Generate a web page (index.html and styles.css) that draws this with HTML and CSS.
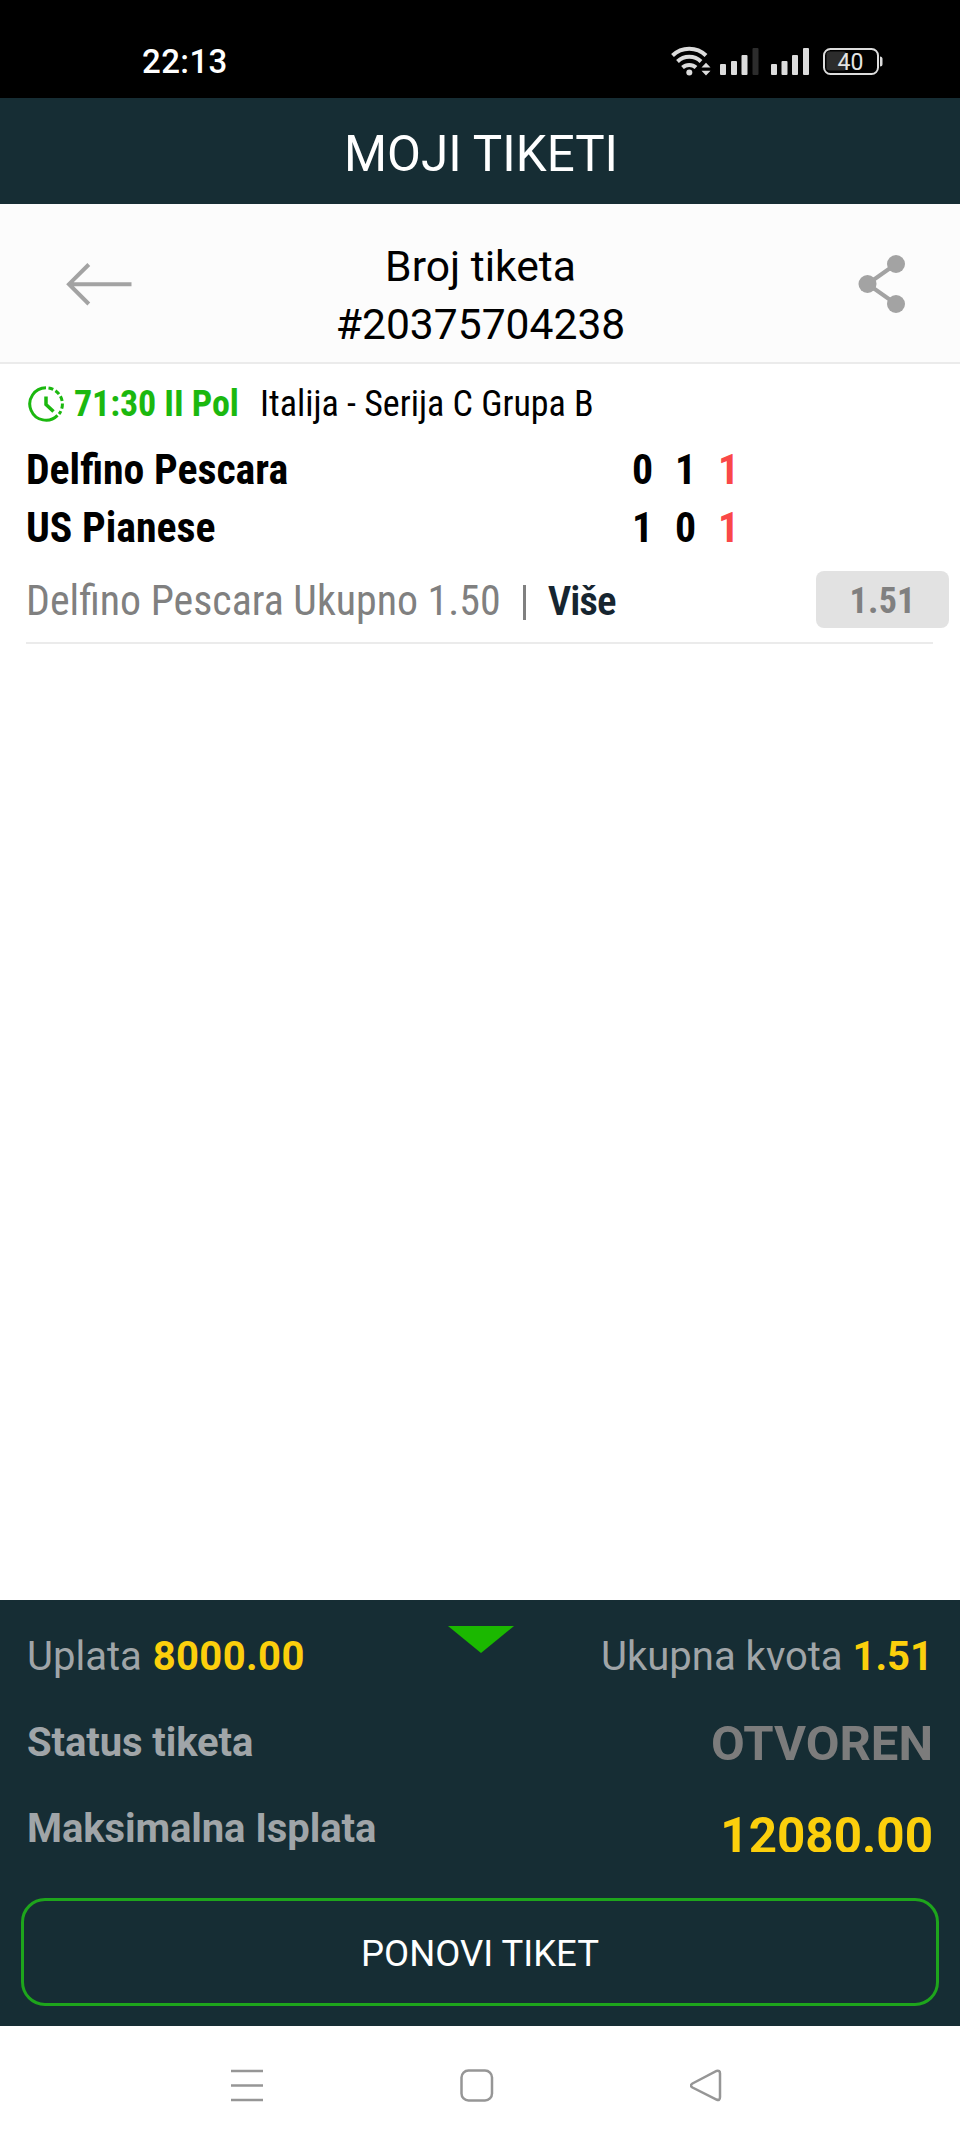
FILE: index.html
```
<!DOCTYPE html>
<html lang="sr">
<head>
    <meta charset="UTF-8">
    <meta name="viewport" content="width=device-width, initial-scale=1.0">
    <title>Moji tiketi</title>
    <link rel="stylesheet" href="styles.css">
</head>
<body>
    <!-- Statusna traka -->
    <div class="status-bar">
        <span class="time">22:13</span>
        <svg class="status-icons" width="216" height="34" viewBox="668 44 216 34">
            <g fill="none" stroke="#dcdcdc" stroke-width="4">
                <path d="M672.5 55.500 A24 24 0 0 1 706 55.500"/>
                <path d="M677.500 61.500 A17 17 0 0 1 701 61.500"/>
                <path d="M682.500 67.500 A10 10 0 0 1 696 67.500"/>
            </g>
            <g fill="#dcdcdc">
                <circle cx="689.300" cy="72.500" r="3"/>
                <path d="M701.500 67.500h9l-4.500-4.800zM701.500 70.800h9l-4.500 4.800z"/>
                <rect x="720" y="64" width="6" height="11" rx="1"/>
                <rect x="731" y="61" width="6" height="14" rx="1"/>
                <rect x="741.500" y="55" width="6" height="20" rx="1"/>
                <rect x="752.500" y="48" width="6" height="27" rx="1" fill="#2c2c2c"/>
                <rect x="771" y="64" width="6" height="11" rx="1"/>
                <rect x="781.500" y="61" width="6" height="14" rx="1"/>
                <rect x="792" y="55" width="6" height="20" rx="1"/>
                <rect x="803" y="48" width="6" height="27" rx="1"/>
                <path d="M880 56.500q2.500 0 2.500 2.500v5q0 2.500-2.500 2.500z"/>
            </g>
            <rect x="826.500" y="51.500" width="20" height="19" rx="3" fill="#2c2c2c"/>
            <rect x="824" y="49" width="54" height="25" rx="6.500" fill="none" stroke="#dcdcdc" stroke-width="2"/>
            <text class="battery" x="850.500" y="69.500">40</text>
        </svg>
    </div>

    <div class="title-bar">MOJI TIKETI</div>

    <!-- Broj tiketa -->
    <div class="ticket-head">
        <svg width="68" height="44" viewBox="65 262 68 44" fill="none" stroke="#a3a3a3" stroke-width="4">
            <path d="M131.500 284.200H68.500M88.800 264.500L69 284.200L88.800 304"/>
        </svg>
        <div class="ticket-number">Broj tiketa<br>#20375704238</div>
        <svg width="48" height="60" viewBox="858 254 48 60" fill="#a3a3a3">
            <path d="M896 264L867.500 284L896 304" fill="none" stroke="#a3a3a3" stroke-width="4"/>
            <circle cx="896" cy="264" r="9"/>
            <circle cx="867.500" cy="284" r="9"/>
            <circle cx="896" cy="304" r="9"/>
        </svg>
    </div>

    <!-- Mec -->
    <div class="match">
        <div class="match-info">
            <svg width="36" height="36" viewBox="0 0 36 36" fill="none" stroke="#1bb80f" stroke-width="3">
                <path d="M18 1.800A16.200 16.200 0 1 0 29.500 29.400"/>
                <path d="M20.500 2A16.200 16.200 0 0 1 31 28" stroke-dasharray="5 2.500"/>
                <path d="M18 10.500V18.500L25.500 25.500" stroke-width="3.500"/>
            </svg>
            <span class="clock">71:30 II Pol</span>
            <span class="league">Italija - Serija C Grupa B</span>
        </div>
        <div class="team">
            <span class="team-name">Delfino Pescara</span>
            <span class="score">0</span>
            <span class="score">1</span>
            <span class="score total">1</span>
        </div>
        <div class="team">
            <span class="team-name">US Pianese</span>
            <span class="score">1</span>
            <span class="score">0</span>
            <span class="score total">1</span>
        </div>
        <div class="bet">
            <span class="bet-name">Delfino Pescara Ukupno 1.50</span>
            <span class="divider"></span>
            <span class="more">Više</span>
            <span class="odds">1.51</span>
        </div>
    </div>

    <!-- Pregled uplate -->
    <div class="summary">
        <div class="row">
            <div class="stake">Uplata <b>8000.00</b></div>
            <svg class="toggle" width="66" height="28" viewBox="0 0 66 28"><path d="M0 0H66L33 27z" fill="#1bb800"/></svg>
            <div class="total-odds">Ukupna kvota <b>1.51</b></div>
        </div>
        <div class="row">
            <b class="label">Status tiketa</b>
            <b class="status">OTVOREN</b>
        </div>
        <div class="row">
            <b class="label">Maksimalna Isplata</b>
            <b class="payout">12080.00</b>
        </div>
        <button class="repeat">PONOVI TIKET</button>
    </div>

    <!-- Navigacija telefona -->
    <div class="nav-bar">
        <svg width="34" height="34" viewBox="0 0 34 34"><path d="M1 2H33M1 16.500H33M1 31H33"/></svg>
        <svg width="34" height="34" viewBox="0 0 34 34"><rect x="1.500" y="1.500" width="30.500" height="30" rx="7"/></svg>
        <svg width="34" height="34" viewBox="0 0 34 34"><path d="M26.500 2Q30 1 30 4.500V28Q30 32 26.500 30.500L2.500 18.500Q-0.500 16.500 2.500 14.500z"/></svg>
    </div>
</body>
</html>
```
FILE: styles.css
```
body {
    margin: 0;
    width: 960px;
    height: 2144px;
    display: flex;
    flex-direction: column;
    background-color: white;
    font-family: Roboto, sans-serif;
    color: #000;
    overflow: hidden;
    white-space: nowrap;
}
svg {
    display: block;
    flex: none;
}
.status-bar {
    height: 98px;
    box-sizing: border-box;
    padding: 44px 76px 0 142px;
    display: flex;
    justify-content: space-between;
    background-color: black;
}
.time {
    color: white;
    font-size: 33px;
    line-height: 36px;
    letter-spacing: 0.4px;
    font-weight: 500;
}
.battery {
    font-size: 23px;
    fill: #e4e4e4;
    text-anchor: middle;
}
.title-bar {
    height: 106px;
    box-sizing: border-box;
    padding: 4px 0 0 2px;
    line-height: 105px;
    background-color: #162d34;
    color: white;
    text-align: center;
    font-size: 49.3px;
}
.ticket-head {
    height: 160px;
    box-sizing: border-box;
    padding: 33px 54px 0 65px;
    display: flex;
    justify-content: space-between;
    background-color: #fcfcfc;
    border-bottom: 2px solid #ebebeb;
}
.ticket-head svg {
    margin-top: 25px;
}
.ticket-head svg:last-child {
    margin-top: 17px;
}
.ticket-number {
    flex: 1;
    padding-right: 30px;
    font-size: 42.6px;
    line-height: 58px;
    text-align: center;
}
.match {
    flex: 1;
    font-stretch: 75%;
    font-family: "Roboto Condensed", Roboto, sans-serif;
}
.match-info {
    display: flex;
    align-items: center;
    height: 60px;
    padding: 10px 0 0 28px;
    font-size: 36px;
}
.clock {
    margin-left: 10px;
    width: 186px;
    color: #1bb80f;
    font-weight: bold;
    letter-spacing: -0.1px;
}
.team {
    display: flex;
    width: 750px;
    padding-left: 26px;
    box-sizing: border-box;
    font-size: 41.8px;
    line-height: 58px;
    font-weight: bold;
}
.team-name {
    flex: 1;
}
.match-info + .team {
    margin-top: 7px;
}
.score {
    width: 43px;
    text-align: center;
}
.total {
    color: #fa4848;
}
.bet {
    display: flex;
    align-items: center;
    box-sizing: border-box;
    height: 87px;
    margin: 0 27px 0 26px;
    border-bottom: 2px solid #ebebeb;
    font-size: 42px;
    color: #808080;
}
.bet-name {
    padding-top: 2px;
    font-size: 41.9px;
}
.divider {
    width: 3px;
    height: 35px;
    margin: 5px 22px 0 22px;
    background-color: #808080;
}
.more {
    padding-top: 2px;
    color: #162530;
    font-weight: 600;
    font-size: 41px;
    letter-spacing: -1px;
}
.odds {
    margin-left: auto;
    margin-right: -16px;
    width: 133px;
    height: 57px;
    border-radius: 8px;
    background-color: #e2e2e2;
    font-size: 36px;
    line-height: 61px;
    letter-spacing: 0.2px;
    font-weight: bold;
    text-align: center;
}
.summary {
    height: 426px;
    box-sizing: border-box;
    padding: 13px 27px 0;
    background-color: #162d34;
    color: #a0a5a8;
    font-size: 40px;
}
.row {
    display: flex;
    justify-content: space-between;
    height: 86px;
    line-height: 87px;
}
.row div b {
    color: #fccf0c;
}
.toggle {
    margin: 13px -1px 0 1px;
}
.stake,
.total-odds {
    flex: 1;
}
.stake b {
    margin-left: 1px;
    letter-spacing: 0.4px;
}
.total-odds {
    text-align: right;
}
.label {
    letter-spacing: -0.1px;
}
.status {
    padding-top: 1px;
    font-size: 49px;
    color: #7c7c7c;
}
/* iznos je odsecen na dnu */
.payout {
    height: 67px;
    line-height: 102px;
    overflow: hidden;
    font-size: 49.4px;
    color: #fccf0c;
}
.repeat {
    display: block;
    width: 918px;
    height: 108px;
    margin: 27px 0 0 -6px;
    padding-top: 3px;
    border: 3px solid #1ea51c;
    border-radius: 24px;
    background-color: transparent;
    color: white;
    font-family: Roboto, sans-serif;
    font-size: 36.5px;
}
.nav-bar {
    height: 118px;
    display: flex;
    padding-left: 230px;
    gap: 196px;
    box-sizing: border-box;
    padding-top: 43px;
    background-color: white;
}
.nav-bar svg {
    fill: none;
    stroke: #969696;
    stroke-width: 2.5;
}
```
